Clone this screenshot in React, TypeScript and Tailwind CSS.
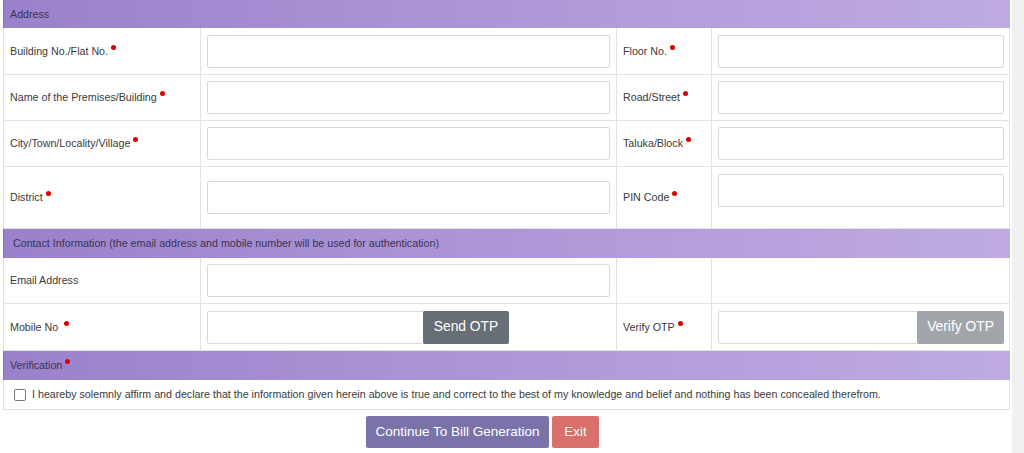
import React from "react";

const Dot = () => (
  <span className="inline-block w-[5px] h-[5px] rounded-full bg-[#d80000] ml-[3px] relative top-[-5px]" />
);

const Input = ({ className = "" }: { className?: string }) => (
  <div className={`h-[33px] border border-[#d9d9d9] rounded-[2px] bg-white ${className}`} />
);

const Header = ({ children, h = "h-[28px]" }: { children: React.ReactNode; h?: string }) => (
  <div
    className={`${h} flex items-center border-l border-[#8a70b8] bg-gradient-to-r from-[#9a81cb] via-[#ae97d8] to-[#bfabe2] text-[#3a3450] text-[10.7px]`}
  >
    {children}
  </div>
);

const Label = ({ text, req = true, gap = false }: { text: string; req?: boolean; gap?: boolean }) => (
  <div className="flex items-center px-[6px] border-r border-[#e2e2e2] text-[#3a3a3a] text-[10.7px]">
    <span>
      {text}
      {gap ? "\u00a0" : ""}
      {req ? <Dot /> : null}
    </span>
  </div>
);

const Row = ({ children, h }: { children: React.ReactNode; h: string }) => (
  <div
    className={`grid grid-cols-[197px_416px_95px_299px] ${h} border-l border-r border-b border-[#e2e2e2] bg-white`}
  >
    {children}
  </div>
);

export default function App() {
  return (
    <div
      className="flex w-[1024px] h-[453px] overflow-hidden bg-white"
      style={{ fontFamily: '"Liberation Sans", Arial, sans-serif' }}
    >
      <div className="w-[1012px] pl-[3px] pr-[2px]">
        <Header>
          <span className="pl-[6px]">Address</span>
        </Header>
        <Row h="h-[47px]">
          <Label text="Building No./Flat No." />
          <div className="flex items-center px-[6px] border-r border-[#e2e2e2]"><Input className="w-full" /></div>
          <Label text="Floor No." />
          <div className="flex items-center pl-[6px] pr-[7px]"><Input className="w-full" /></div>
        </Row>
        <Row h="h-[46px]">
          <Label text="Name of the Premises/Building" />
          <div className="flex items-center px-[6px] border-r border-[#e2e2e2]"><Input className="w-full" /></div>
          <Label text="Road/Street" />
          <div className="flex items-center pl-[6px] pr-[7px]"><Input className="w-full" /></div>
        </Row>
        <Row h="h-[46px]">
          <Label text="City/Town/Locality/Village" />
          <div className="flex items-center px-[6px] border-r border-[#e2e2e2]"><Input className="w-full" /></div>
          <Label text="Taluka/Block" />
          <div className="flex items-center pl-[6px] pr-[7px]"><Input className="w-full" /></div>
        </Row>
        <Row h="h-[62px]">
          <Label text="District" />
          <div className="flex items-center px-[6px] border-r border-[#e2e2e2]"><Input className="w-full" /></div>
          <Label text="PIN Code" />
          <div className="pl-[6px] pr-[7px] pt-[7px]"><Input className="w-full" /></div>
        </Row>
        <Header h="h-[29px]">
          <span className="pl-[9px]">
            Contact Information (the email address and mobile number will be used for authentication)
          </span>
        </Header>
        <Row h="h-[46px]">
          <Label text="Email Address" req={false} />
          <div className="flex items-center px-[6px] border-r border-[#e2e2e2]"><Input className="w-full" /></div>
          <div className="border-r border-[#e2e2e2]" />
          <div />
        </Row>
        <Row h="h-[47px]">
          <Label text="Mobile No" gap />
          <div className="flex items-center px-[6px] border-r border-[#e2e2e2]">
            <div className="flex w-[302px] h-[33px] border border-[#d9d9d9] rounded-[2px]">
              <div className="flex-1" />
              <div className="w-[86px] h-[33px] -my-px -mr-px bg-[#676e75] rounded-[2px] text-white text-[13.8px] flex items-center justify-center">
                Send OTP
              </div>
            </div>
          </div>
          <Label text="Verify OTP" />
          <div className="flex items-center pl-[6px] pr-[7px]">
            <div className="flex w-full h-[33px] border border-[#d9d9d9] rounded-[2px]">
              <div className="flex-1" />
              <div className="w-[87px] h-[33px] -my-px -mr-px bg-[#a2a6ab] rounded-[2px] text-white text-[13.8px] flex items-center justify-center">
                Verify OTP
              </div>
            </div>
          </div>
        </Row>
        <Header h="h-[29px]">
          <span className="pl-[6px]">
            Verification
            <Dot />
          </span>
        </Header>
        <div className="h-[30px] flex items-center border-l border-r border-b border-[#e2e2e2] text-[#3a3a3a] text-[10.7px]">
          <span className="ml-[10px] w-[12px] h-[12px] border border-[#777] rounded-[2px] bg-white" />
          <span className="ml-[6px]">
            I heareby solemnly affirm and declare that the information given herein above is true and correct to the best of my knowledge and belief and nothing has been concealed therefrom.
          </span>
        </div>
        <div className="flex pt-[6px] pl-[363px] gap-[3px]">
          <div className="h-[32px] w-[183px] bg-[#7a73aa] rounded-[2px] text-white text-[13.5px] flex items-center justify-center">
            Continue To Bill Generation
          </div>
          <div className="h-[32px] w-[47px] bg-[#d9706b] rounded-[2px] text-white text-[13.5px] flex items-center justify-center">
            Exit
          </div>
        </div>
      </div>
      <div className="flex-1 bg-[#f1f1f1]" />
    </div>
  );
}
